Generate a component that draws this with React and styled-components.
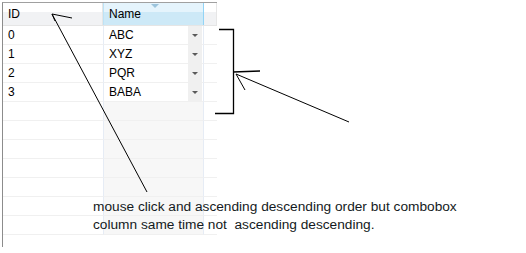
import React from 'react';
import styled, { createGlobalStyle } from 'styled-components';

const GlobalStyle = createGlobalStyle`
  html, body {
    margin: 0;
    padding: 0;
    background: #ffffff;
  }
  body {
    font-family: "Liberation Sans", Arial, sans-serif;
  }
`;

const rows = [
  { id: '0', name: 'ABC' },
  { id: '1', name: 'XYZ' },
  { id: '2', name: 'PQR' },
  { id: '3', name: 'BABA' },
];

const emptyRows = 7;

const Canvas = styled.div`
  position: relative;
  width: 526px;
  height: 253px;
  overflow: hidden;
  padding: 2px 0 0 2px;
  box-sizing: border-box;
`;

const Grid = styled.div`
  width: 214px;
  height: 244px;
  border-top: 1px solid #a0a0a0;
  border-left: 1px solid #8c8c8c;
  display: flex;
  flex-direction: column;
  overflow: hidden;
  font-size: 12px;
  color: #000;
`;

const HeaderRow = styled.div`
  display: flex;
  height: 22px;
  flex: none;
  border-bottom: 1px solid #e5e5e5;
`;

const HeaderCell = styled.div`
  width: ${({w}) => w}px;
  flex: none;
  position: relative;
  box-sizing: border-box;
  display: flex;
  align-items: center;
  padding-left: 5px;
  background: ${({sorted}) => sorted
    ? 'linear-gradient(#e5f4fc 0%, #e5f4fc 40%, #cde9f7 41%, #cde9f7 100%)'
    : 'linear-gradient(#ffffff 0%, #ffffff 40%, #f1f2f4 41%, #f1f2f4 100%)'};
  border-right: 1px solid ${({sorted}) => sorted ? '#92d4f6' : '#e6e6e6'};
  border-left: ${({sorted}) => sorted ? '1px solid #bde3f6' : 'none'};
`;

const SortArrow = styled.span`
  position: absolute;
  top: 1px;
  left: 47px;
  width: 0;
  height: 0;
  border-left: 4px solid transparent;
  border-right: 4px solid transparent;
  border-top: 4px solid #9cc4dc;
`;

const Body = styled.div`
  flex: 1;
  display: flex;
  flex-direction: column;
`;

const Row = styled.div`
  display: flex;
  height: 19px;
  flex: none;
`;

const Cell = styled.div`
  width: ${({w}) => w}px;
  flex: none;
  box-sizing: border-box;
  display: flex;
  align-items: center;
  padding-left: 5px;
  border-bottom: 1px solid #f0f0f0;
  background: ${({tone}) => tone === 'col' ? '#f7f7f7' : '#ffffff'};
  border-left: ${({tone}) => tone === 'col' || tone === 'combo' ? '1px solid #e6ecf5' : 'none'};
  border-right: ${({tone}) => tone === 'col' || tone === 'combo' ? '1px solid #e6ecf5' : 'none'};
`;

const ComboText = styled.span`
  flex: 1;
`;

const DropButton = styled.div`
  width: 14px;
  height: 18px;
  margin-right: 1px;
  background: #f0f0f0;
  display: flex;
  align-items: center;
  justify-content: center;
  &::after {
    content: '';
    border-left: 3px solid transparent;
    border-right: 3px solid transparent;
    border-top: 3px solid #5a5a5a;
  }
`;

const Caption = styled.p`
  position: absolute;
  left: 93px;
  top: 198px;
  margin: 0;
  font-family: "Liberation Sans", Arial, sans-serif;
  font-size: 13.7px;
  line-height: 18px;
  color: #141a22;
  white-space: pre;
`;

const Annotations = styled.svg`
  position: absolute;
  left: 0;
  top: 0;
  pointer-events: none;
`;

const App = () => {
  return (
    <Canvas>
      <GlobalStyle />
      <Grid>
        <HeaderRow>
          <HeaderCell w={100}>ID</HeaderCell>
          <HeaderCell w={101} sorted>
            <SortArrow />
            Name
          </HeaderCell>
          <HeaderCell w={13} />
        </HeaderRow>
        <Body>
          {rows.map((r) => (
            <Row key={r.id}>
              <Cell w={100}>{r.id}</Cell>
              <Cell w={101} tone="combo">
                <ComboText>{r.name}</ComboText>
                <DropButton />
              </Cell>
              <Cell w={13} />
            </Row>
          ))}
          {Array.from({ length: emptyRows }).map((_, i) => (
            <Row key={'e' + i}>
              <Cell w={100} />
              <Cell w={101} tone="col" />
              <Cell w={13} />
            </Row>
          ))}
        </Body>
      </Grid>

      <Caption>{'mouse click and ascending descending order but combobox\ncolumn same time not  ascending descending.'}</Caption>

      <Annotations width="526" height="253" viewBox="0 0 526 253">
        <g stroke="#000" fill="none" strokeWidth="1">
          <line x1="52" y1="14" x2="147" y2="192" />
          <line x1="52" y1="14" x2="72" y2="18" />
          <line x1="52" y1="14" x2="55" y2="21" />
          <polyline points="219,29.5 233.5,29.5 233.5,113.5 215,113.5" strokeWidth="1.3" />
          <line x1="233" y1="72" x2="260" y2="71" strokeWidth="1.3" />
          <line x1="236" y1="74" x2="349" y2="122" />
          <line x1="236" y1="74" x2="245" y2="90" />
        </g>
      </Annotations>
    </Canvas>
  );
};

export default App;
